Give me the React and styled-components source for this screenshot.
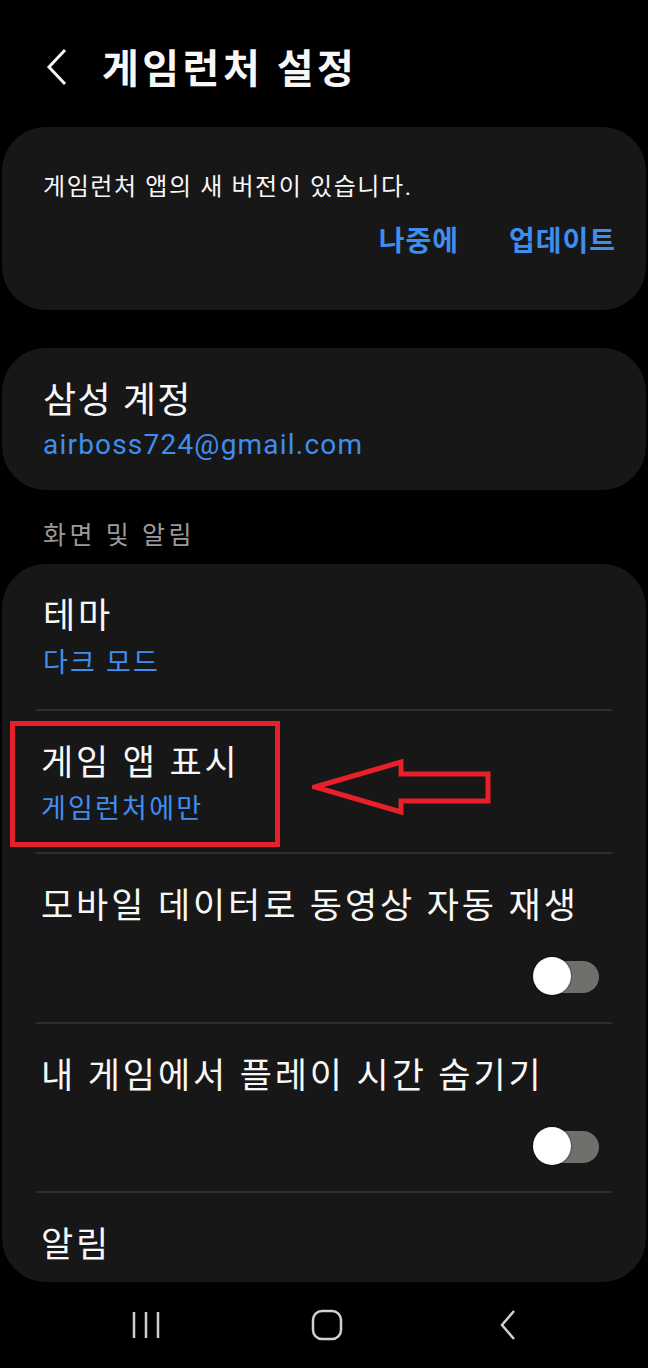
import React from 'react';
import styled, { createGlobalStyle } from 'styled-components';

// Design
const GlobalStyle = createGlobalStyle`
  body {
    margin: 0;
    background: #000;
    font-family: Roboto, "Noto Sans CJK KR", sans-serif;
    color: #f7f7f7;
  }
`;

const Screen = styled.div`
  width: 648px;
  height: 1368px;
  display: flex;
  flex-direction: column;
  background: #000;
  overflow: hidden;
`;

const Content = styled.div`
  flex: 1;
  overflow: hidden;
  display: flex;
  flex-direction: column;
  padding: 0 2px;
`;

const Header = styled.header`
  height: 127px;
  display: flex;
  align-items: flex-start;
  padding: 47px 0 0 42px;
  box-sizing: border-box;
  gap: 32px;

  & h1 {
    margin: 0;
    font-size: 40px;
    font-weight: 700;
    line-height: 46px;
    letter-spacing: 3.5px;
  }
`;

const Card = styled.section`
  background: #171717;
  border-radius: 44px;
  margin-bottom: ${p => p.$gap || 0}px;
  flex-shrink: 0;
  ${p => p.$grow && 'flex: 1;'}
`;

const Banner = styled.div`
  height: 183px;
  padding: 43px 30px 0 41px;
  box-sizing: border-box;

  & p {
    margin: 0;
    font-size: 24px;
    line-height: 34px;
    letter-spacing: 1.6px;
  }
`;

const Actions = styled.div`
  display: flex;
  justify-content: flex-end;
  gap: 50px;
  margin-top: 19px;
`;

const TextButton = styled.span`
  color: #3e8ef2;
  font-size: 28px;
  font-weight: 700;
  line-height: 38px;
  letter-spacing: 1px;
`;

const Row = styled.div`
  position: relative;
  min-height: ${p => p.$h}px;
  box-sizing: border-box;
  padding: 31px 44px 0 41px;
  border-top: ${p => (p.$divided ? '2px solid #2e2e2e' : 'none')};
  margin: 0 ${p => (p.$divided ? 34 : 0)}px;
  ${p => p.$divided && 'padding-left: 5px; padding-right: 13px;'}
`;

const Title = styled.div`
  font-size: ${p => p.$size || 35}px;
  line-height: 44px;
  letter-spacing: ${p => p.$ls || 2.9}px;
`;

const Sub = styled.div`
  color: #3e8ef2;
  font-size: ${p => p.$size || 27}px;
  line-height: 36px;
  margin-top: ${p => p.$mt || 5}px;
  letter-spacing: ${p => p.$ls || 2.2}px;
`;

const SectionLabel = styled.div`
  color: #9a9a9a;
  font-size: 25px;
  line-height: 34px;
  padding: 0 0 11px 41px;
  margin-top: -9px;
  letter-spacing: 3.5px;
`;

const ToggleWrap = styled.div`
  display: flex;
  justify-content: flex-end;
  margin-top: 28px;
`;

const Toggle = styled.div`
  position: relative;
  width: 66px;
  height: 39px;

  &::before {
    content: '';
    position: absolute;
    left: 14px;
    top: 4px;
    width: 52px;
    height: 32px;
    border-radius: 16px;
    background: #6f6f6b;
  }

  &::after {
    content: '';
    position: absolute;
    left: 0;
    top: 0;
    width: 38px;
    height: 38px;
    border-radius: 50%;
    background: #fff;
    box-shadow: 0 0 2px rgba(0, 0, 0, 0.8);
  }
`;

const Highlight = styled.div`
  position: absolute;
  left: -26px;
  top: 10px;
  width: 270px;
  height: 126px;
  border: 5px solid #e8202a;
  box-sizing: border-box;
  pointer-events: none;
`;

const Arrow = styled.svg`
  position: absolute;
  left: 276px;
  top: 48px;
`;

const NavBar = styled.nav`
  height: 86px;
  background: #000;
  display: grid;
  grid-template-columns: repeat(3, 181px);
  align-items: center;
  justify-items: center;
  padding-left: 55px;
  flex-shrink: 0;
`;

const BackIcon = () => (
  <svg width='26' height='40' viewBox='0 0 26 40'>
    <path d='M21 3 L5 20 L21 37' fill='none' stroke='#f5f5f5' strokeWidth='3' />
  </svg>
);

const Settings = () => (
  <Screen>
    <GlobalStyle />
    <Content>
      <Header>
        <BackIcon />
        <h1>게임런처 설정</h1>
      </Header>

      <Card $gap={38}>
        <Banner>
          <p>게임런처 앱의 새 버전이 있습니다.</p>
          <Actions>
            <TextButton>나중에</TextButton>
            <TextButton>업데이트</TextButton>
          </Actions>
        </Banner>
      </Card>

      <Card $gap={38}>
        <Row $h={142}>
          <Title $size={36} $ls={1.5}>삼성 계정</Title>
          <Sub $size={28} $mt={4} $ls={1.2}>airboss724@gmail.com</Sub>
        </Row>
      </Card>

      <SectionLabel>화면 및 알림</SectionLabel>

      <Card $grow>
        <Row $h={145}>
          <Title>테마</Title>
          <Sub $mt={6}>다크 모드</Sub>
        </Row>
        <Row $h={143} $divided>
          <Title>게임 앱 표시</Title>
          <Sub>게임런처에만</Sub>
          <Highlight />
          <Arrow width='180' height='56' viewBox='0 0 180 56'>
            <path
              d='M3 28 L89 3 L89 15 L176 15 L176 42 L89 42 L89 53 Z'
              fill='none'
              stroke='#e8202a'
              strokeWidth='5'
              strokeLinejoin='miter'
            />
          </Arrow>
        </Row>
        <Row $h={170} $divided>
          <Title>모바일 데이터로 동영상 자동 재생</Title>
          <ToggleWrap>
            <Toggle />
          </ToggleWrap>
        </Row>
        <Row $h={169} $divided>
          <Title>내 게임에서 플레이 시간 숨기기</Title>
          <ToggleWrap>
            <Toggle />
          </ToggleWrap>
        </Row>
        <Row $h={90} $divided>
          <Title>알림</Title>
        </Row>
      </Card>
    </Content>

    <NavBar>
      <svg width='30' height='30' viewBox='0 0 30 30'>
        <path d='M3 2 V28 M15 2 V28 M27 2 V28' stroke='#d0d0d0' strokeWidth='2.5' />
      </svg>
      <svg width='32' height='32' viewBox='0 0 32 32'>
        <rect x='2' y='2' width='28' height='28' rx='9' fill='none' stroke='#d0d0d0' strokeWidth='2.5' />
      </svg>
      <svg width='18' height='32' viewBox='0 0 18 32'>
        <path d='M15 2 L3 16 L15 30' fill='none' stroke='#d0d0d0' strokeWidth='2.5' />
      </svg>
    </NavBar>
  </Screen>
);

export default Settings;
